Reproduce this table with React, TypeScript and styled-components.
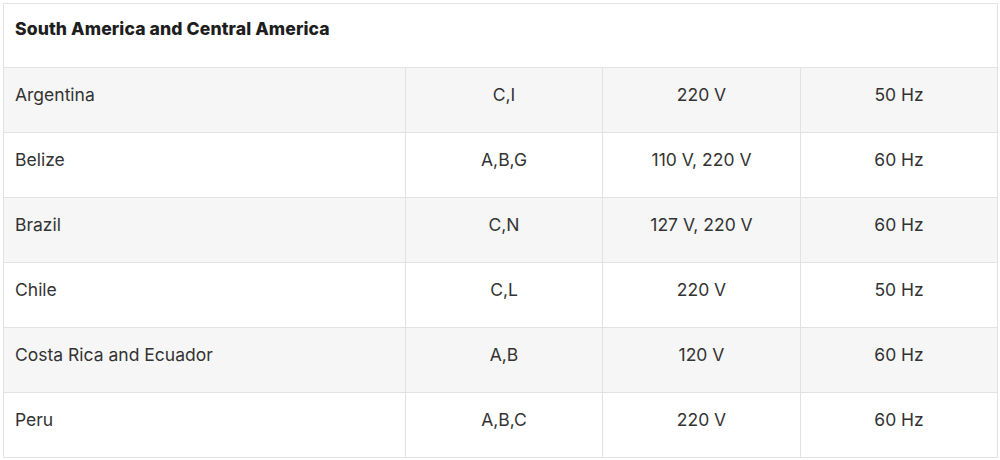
import React from 'react';
import styled, { createGlobalStyle } from 'styled-components';

const GlobalStyle = createGlobalStyle`
  html, body {
    margin: 0;
    padding: 0;
    background: #ffffff;
  }
  body {
    font-family: Inter, 'Noto Sans', Arial, sans-serif;
    color: #333333;
  }
`;

const borderColor = '#e2e2e2';
const stripe = '#f6f6f6';

const Page = styled.div`
  padding: 3px 2px 0 3px;
`;

const Table = styled.table`
  width: 995px;
  border-collapse: collapse;
  table-layout: fixed;
  border: 1px solid ${borderColor};
`;

const TitleCell = styled.th`
  height: 64px;
  padding: 12px 11px 0;
  text-align: left;
  vertical-align: top;
  font-size: 17.6px;
  font-weight: 800;
  letter-spacing: 0.1px;
  color: #1e1e1e;
  line-height: 26px;
  box-sizing: border-box;
`;

const Row = styled.tr<{ $striped: boolean }>`
  background: ${(p) => (p.$striped ? stripe : '#ffffff')};
`;

const Cell = styled.td<{ $center?: boolean }>`
  height: 65px;
  box-sizing: border-box;
  border: 1px solid ${borderColor};
  padding: 14px 11px 0;
  vertical-align: top;
  text-align: ${(p) => (p.$center ? 'center' : 'left')};
  font-size: 17.5px;
  line-height: 26px;
  color: #333333;
`;

const rows = [
  ['Argentina', 'C,I', '220 V', '50 Hz'],
  ['Belize', 'A,B,G', '110 V, 220 V', '60 Hz'],
  ['Brazil', 'C,N', '127 V, 220 V', '60 Hz'],
  ['Chile', 'C,L', '220 V', '50 Hz'],
  ['Costa Rica and Ecuador', 'A,B', '120 V', '60 Hz'],
  ['Peru', 'A,B,C', '220 V', '60 Hz'],
];

export default function App() {
  return (
    <Page>
      <GlobalStyle />
      <Table>
        <colgroup>
          <col style={{ width: 402 }} />
          <col style={{ width: 197 }} />
          <col style={{ width: 198 }} />
          <col style={{ width: 197 }} />
        </colgroup>
        <thead>
          <tr>
            <TitleCell colSpan={4}>South America and Central America</TitleCell>
          </tr>
        </thead>
        <tbody>
          {rows.map((r, i) => (
            <Row key={r[0]} $striped={i % 2 === 0}>
              <Cell>{r[0]}</Cell>
              <Cell $center>{r[1]}</Cell>
              <Cell $center>{r[2]}</Cell>
              <Cell $center>{r[3]}</Cell>
            </Row>
          ))}
        </tbody>
      </Table>
    </Page>
  );
}
